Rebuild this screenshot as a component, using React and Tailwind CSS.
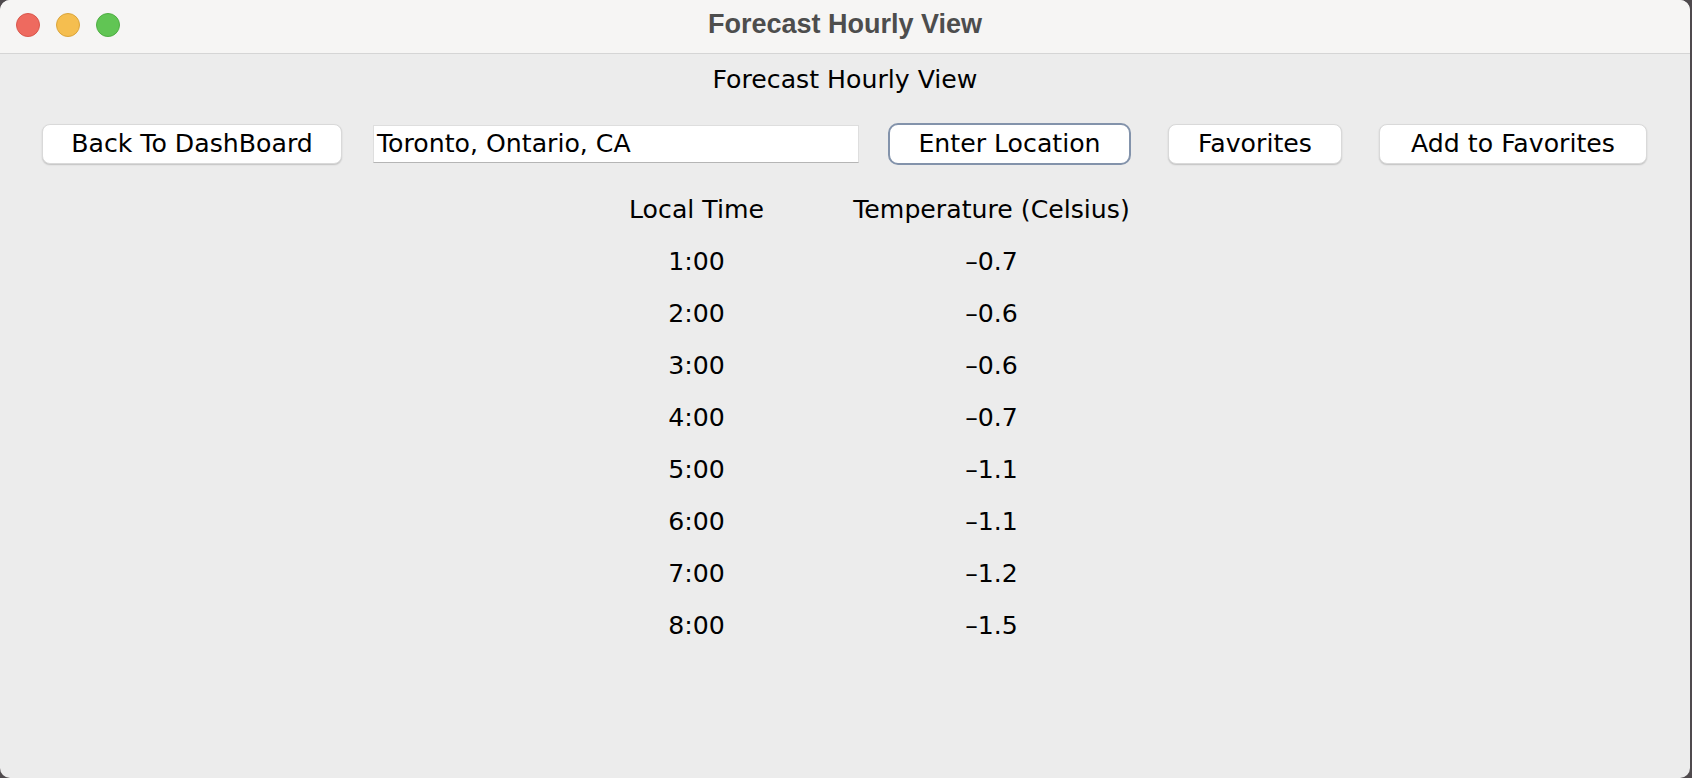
import React from 'react';

const rows = [
  ['1:00', '–0.7'],
  ['2:00', '–0.6'],
  ['3:00', '–0.6'],
  ['4:00', '–0.7'],
  ['5:00', '–1.1'],
  ['6:00', '–1.1'],
  ['7:00', '–1.2'],
  ['8:00', '–1.5'],
];

const btn =
  'h-[40px] bg-white rounded-[8px] border border-[#d9d9d9] shadow-[0_1px_1.5px_rgba(0,0,0,0.18)] text-black flex items-center justify-center';

const App = () => {
  return (
    <div
      className="w-[1692px] h-[778px] bg-[#4f4a4d] overflow-hidden"
      style={{ fontFamily: '"DejaVu Sans", "Liberation Sans", sans-serif' }}
    >
      <div className="w-[1690px] h-[778px] rounded-[10px] overflow-hidden bg-[#ececec] flex flex-col">
        {/* Title bar */}
        <div className="h-[54px] shrink-0 bg-[#f6f5f4] border-b border-[#d5d5d5] relative flex items-center justify-center">
          <div className="absolute left-[16px] top-[13px] flex gap-[16px]">
            <span className="w-[24px] h-[24px] rounded-full bg-[#ee6a5f] border border-[#d9574c]"></span>
            <span className="w-[24px] h-[24px] rounded-full bg-[#f5be4f] border border-[#dba53b]"></span>
            <span className="w-[24px] h-[24px] rounded-full bg-[#61c554] border border-[#4fae43]"></span>
          </div>
          <span
            className="text-[27px] font-bold text-[#4d4d4d] -mt-[5px]"
            style={{ fontFamily: '"Liberation Sans", Arial, sans-serif' }}
          >
            Forecast Hourly View
          </span>
        </div>

        {/* Content */}
        <div className="flex flex-col items-center">
          <div className="mt-[11px] h-[30px] leading-[30px] text-[25.2px] text-black">Forecast Hourly View</div>

          <div className="mt-[28px] w-full flex items-center h-[42px] pl-[42px] text-[25.2px]">
            <button className={`${btn} w-[300px]`}>Back To DashBoard</button>
            <div className="ml-[31px] w-[486px] h-[38px] bg-white border border-[#dedede] border-b-[#b5b5b5] flex items-center pl-[3px] text-black">
              Toronto, Ontario, CA
            </div>
            <button className="ml-[29px] w-[243px] h-[42px] bg-white rounded-[10px] border-2 border-[#8393ab] text-black flex items-center justify-center">
              Enter Location
            </button>
            <button className={`${btn} ml-[37px] w-[174px]`}>Favorites</button>
            <button className={`${btn} ml-[37px] w-[268px]`}>Add to Favorites</button>
          </div>

          <div className="mt-[19px] grid grid-cols-[295px_295px] ml-[-2px] text-[25.2px] text-black">
            <div className="h-[52px] flex items-center justify-center">Local Time</div>
            <div className="h-[52px] flex items-center justify-center">Temperature (Celsius)</div>
            {rows.map(([t, v]) => (
              <React.Fragment key={t}>
                <div className="h-[52px] flex items-center justify-center">{t}</div>
                <div className="h-[52px] flex items-center justify-center">{v}</div>
              </React.Fragment>
            ))}
          </div>
        </div>
      </div>
    </div>
  );
};

export default App;
